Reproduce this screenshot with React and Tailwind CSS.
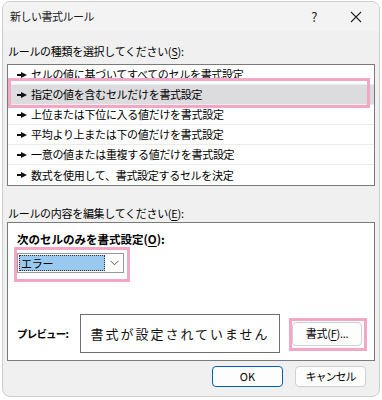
const FONT = { fontFamily: '"Noto Sans CJK JP", "Noto Sans", sans-serif' };

const RULES = [
  'セルの値に基づいてすべてのセルを書式設定',
  '指定の値を含むセルだけを書式設定',
  '上位または下位に入る値だけを書式設定',
  '平均より上または下の値だけを書式設定',
  '一意の値または重複する値だけを書式設定',
  '数式を使用して、書式設定するセルを決定',
];

function Arrow() {
  return (
    <svg width="10" height="6" viewBox="0 0 10 6" className="shrink-0">
      <rect x="0" y="2" width="5" height="2" fill="#111" />
      <polygon points="4,0 10,3 4,6" fill="#111" />
    </svg>
  );
}

function Key({ k }) {
  return (
    <>
      (<span className="underline underline-offset-2">{k}</span>)
    </>
  );
}

export default function App() {
  return (
    <div className="w-[382px] h-[400px] bg-white pt-[1px] pl-[2px]" style={FONT}>
      <div className="relative w-[378px] h-[396px] rounded-[8px] border border-[#cdcdcd] bg-[#f0f0f0] overflow-hidden flex flex-col text-[#000]">
        {/* Title bar */}
        <div className="h-[29px] bg-[#f3f3f3] flex items-center pl-[7px] text-[11px] tracking-[-0.5px] text-[#1a1a1a]">
          <span>新しい書式ルール</span>
          <span className="ml-auto w-[20px] text-center text-[13px] mr-[26px]">?</span>
          <svg width="12" height="12" viewBox="0 0 12 12" className="mr-[17px]">
            <path d="M1 1 L11 11 M11 1 L1 11" stroke="#222" strokeWidth="1.1" />
          </svg>
        </div>

        <div className="px-[4px] flex flex-col text-[11px] tracking-[-0.3px]">
          <div className="mt-[12px] h-[16px] leading-[16px] pl-[1px]">
            ルールの種類を選択してください<Key k="S" />:
          </div>

          {/* Rule type list */}
          <div className="mt-[5px] border border-[#7a7a7a] bg-white">
            {RULES.map((r, i) => (
              <div
                key={r}
                className={`h-[20px] flex items-center gap-[4px] pl-[9px] border-b border-[#ececec] last:border-b-0 ${i === 1 ? 'bg-[#dcdcdf]' : ''}`}
              >
                <Arrow />
                <span className="leading-none">{r}</span>
              </div>
            ))}
          </div>

          <div className="mt-[19px] h-[16px] leading-[16px] pl-[1px]">
            ルールの内容を編集してください<Key k="E" />:
          </div>

          {/* Rule description group */}
          <div className="mt-[1px] h-[139px] border border-[#7a7a7a] bg-white pl-[9px] pt-[8px] flex flex-col">
            <div className="h-[16px] leading-[16px] text-[11.5px] tracking-normal font-bold">
              次のセルのみを書式設定<Key k="O" />:
            </div>
            <div className="mt-[6px] w-[107px] h-[20px] border border-[#9a9a9a] flex bg-white">
              <div className="m-[1px] flex-1 bg-[#99c9ef] border border-dotted border-[#333] flex items-center pl-[1px]">
                エラー
              </div>
              <div className="w-[17px] flex items-center justify-center">
                <svg width="9" height="6" viewBox="0 0 9 6">
                  <path d="M0.5 0.8 L4.5 4.8 L8.5 0.8" fill="none" stroke="#555" strokeWidth="1" />
                </svg>
              </div>
            </div>

            <div className="mt-[41px] flex items-center">
              <span className="w-[63px] text-[10.5px] font-bold tracking-[-0.8px]">プレビュー:</span>
              <div className="w-[200px] h-[39px] border border-[#6e6e6e] flex items-center justify-center text-[13px] tracking-[2px] text-[#111]">
                書式が設定されていません
              </div>
              <button className="ml-[12px] w-[70px] h-[24px] rounded-[4px] border border-[#d0d0d0] bg-[#fdfdfd]">
                書式<Key k="F" />...
              </button>
            </div>
          </div>

          {/* Footer buttons */}
          <div className="mt-[5px] flex justify-end gap-[12px] pr-[9px]">
            <button className="w-[71px] h-[21px] rounded-[4px] border border-[#005fb8] bg-[#fdfdfd] tracking-normal">
              OK
            </button>
            <button className="w-[71px] h-[21px] rounded-[4px] border border-[#d0d0d0] bg-[#fdfdfd] tracking-[-1px]">
              キャンセル
            </button>
          </div>
        </div>

        {/* Pink annotation frames */}
        <div className="absolute left-[5px] top-[76px] w-[362px] h-[30px] border-[3px] border-[#f2a7c7]" />
        <div className="absolute left-[11px] top-[245px] w-[116px] h-[35px] border-[3px] border-[#f2a7c7]" />
        <div className="absolute left-[286px] top-[316px] w-[78px] h-[33px] border-[3px] border-[#f2a7c7]" />
      </div>
    </div>
  );
}
